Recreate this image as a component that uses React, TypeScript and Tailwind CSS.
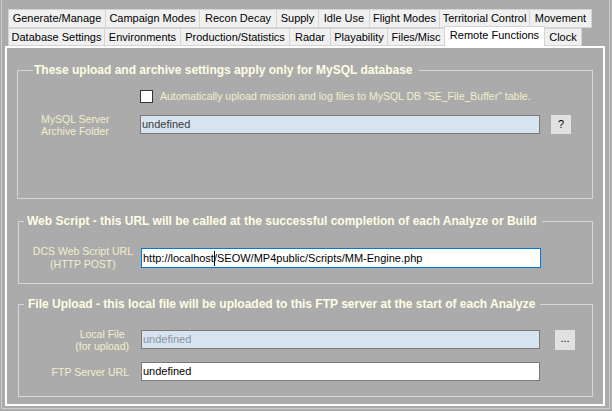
import React from 'react';

const row1 = [
  { label: 'Generate/Manage', w: 'w-[98px]' },
  { label: 'Campaign Modes', w: 'w-[95px]' },
  { label: 'Recon Decay', w: 'w-[78px]' },
  { label: 'Supply', w: 'w-[43px]' },
  { label: 'Idle Use', w: 'w-[52px]' },
  { label: 'Flight Modes', w: 'w-[71px]' },
  { label: 'Territorial Control', w: 'w-[91px]' },
  { label: 'Movement', w: 'w-[63px]' },
];

const row2 = [
  { label: 'Database Settings', w: 'w-[97px]' },
  { label: 'Environments', w: 'w-[77px]' },
  { label: 'Production/Statistics', w: 'w-[110px]' },
  { label: 'Radar', w: 'w-[42px]' },
  { label: 'Playability', w: 'w-[58px]' },
  { label: 'Files/Misc', w: 'w-[58px]' },
  { label: 'Remote Functions', w: 'w-[101px]', selected: true },
  { label: 'Clock', w: 'w-[38px]' },
];

type TabDef = { label: string; w: string; selected?: boolean };

const Tab = ({ t, first }: { t: TabDef; first: boolean }) =>
  t.selected ? (
    <div
      className={`${t.w} relative z-10 -mt-[2px] -ml-px flex h-[20px] items-center justify-center border border-b-0 border-[#d4d4d4] bg-white pb-[3px] text-black`}
    >
      {t.label}
    </div>
  ) : (
    <div
      className={`${t.w} ${first ? '' : '-ml-px'} flex h-full items-center justify-center border border-[#d4d4d4] bg-[#f0f0f0] text-black`}
    >
      {t.label}
    </div>
  );

const labelCls = "text-[10.5px] leading-[12px] text-[#f2eecb]";
const legendCls = "font-bold text-[12px] leading-[14px] text-[#fffde4]";

export default function App() {
  return (
    <div className="h-[411px] w-[612px] overflow-hidden bg-[#ababab] font-['Liberation_Sans',Arial,sans-serif] text-[11px]">
      <div className="ml-px h-[409px] w-[609px] border-x border-b border-[#cdcdcd] pt-[9px]">
        <div className="ml-[6px] flex h-[19px]">
          {row1.map((t, i) => (
            <Tab key={t.label} t={t} first={i === 0} />
          ))}
        </div>
        <div className="ml-[6px] flex h-[18px] items-start">
          {row2.map((t, i) => (
            <Tab key={t.label} t={t} first={i === 0} />
          ))}
        </div>

        <div className="ml-[3px] h-[360px] w-[600px] border-2 border-white px-[10px]">
          {/* MySQL */}
          <fieldset className="mt-[15px] border border-[#d6d6d6] pb-[64px]">
            <legend className={`${legendCls} ml-[15px] pl-[1px] pr-[6px]`}>
              These upload and archive settings apply only for MySQL database
            </legend>
            <div className="ml-[122px] mt-[13px] flex h-[13px] items-center">
              <div className="h-[13px] w-[13px] border border-[#333] bg-white" />
              <span className="ml-[7px] text-[10.5px] text-[#f2eecb]">
                Automatically upload mission and log files to MySQL DB "SE_File_Buffer" table.
              </span>
            </div>
            <div className="mt-[12px] flex h-[19px] items-center">
              <div className={`${labelCls} ml-[23px] w-[99px]`}>
                MySQL Server
                <br />
                Archive Folder
              </div>
              <div className="flex h-[19px] w-[400px] items-center border border-[#7a7a7a] bg-[#d7e3ef] pl-px text-[#3a3a3a]">
                undefined
              </div>
              <button className="ml-[11px] flex h-[19px] w-[20px] items-center justify-center bg-[#e1e1e1] text-black">
                ?
              </button>
            </div>
          </fieldset>

          {/* Web script */}
          <fieldset className="ml-px mt-[15px] border border-[#d6d6d6] pb-[15px]">
            <legend className={`${legendCls} ml-[5px] pl-[3px] pr-[5px]`}>
              Web Script - this URL will be called at the successful completion of each Analyze or Build
            </legend>
            <div className="mt-[20px] flex h-[20px] items-center">
              <div className="flex w-[114px] justify-end">
                <div className={`${labelCls} text-center leading-[13px]`}>
                  DCS Web Script URL
                  <br />
                  (HTTP POST)
                </div>
              </div>
              <div className="ml-[8px] flex h-[20px] w-[400px] items-center border border-[#0078d7] bg-white pl-px text-black">
                http://localhost
                <span className="-mr-px inline-block h-[15px] w-px bg-black" />
                /SEOW/MP4public/Scripts/MM-Engine.php
              </div>
            </div>
          </fieldset>

          {/* File upload */}
          <fieldset className="ml-px mt-[13px] border border-[#d6d6d6] pb-[15px]">
            <legend className={`${legendCls} ml-[5px] pl-[4px] pr-[5px]`}>
              File Upload - this local file will be uploaded to this FTP server at the start of each Analyze
            </legend>
            <div className="mt-[19px] flex h-[19px] items-center">
              <div className="flex w-[110px] justify-end">
                <div className={`${labelCls} text-center`}>
                  Local File
                  <br />
                  (for upload)
                </div>
              </div>
              <div className="ml-[12px] flex h-[19px] w-[399px] items-center border border-[#7a7a7a] bg-[#d7e3ef] pl-px text-[#8a94a6]">
                undefined
              </div>
              <button className="ml-[15px] flex h-[20px] w-[20px] items-center justify-center bg-[#e1e1e1] pb-[3px] text-black">
                ...
              </button>
            </div>
            <div className="mt-[13px] flex h-[19px] items-center">
              <div className="flex w-[110px] justify-end">
                <div className={labelCls}>FTP Server URL</div>
              </div>
              <div className="ml-[12px] flex h-[19px] w-[399px] items-center border border-[#7a7a7a] bg-white pl-px text-black">
                undefined
              </div>
            </div>
          </fieldset>
        </div>
      </div>
    </div>
  );
}
